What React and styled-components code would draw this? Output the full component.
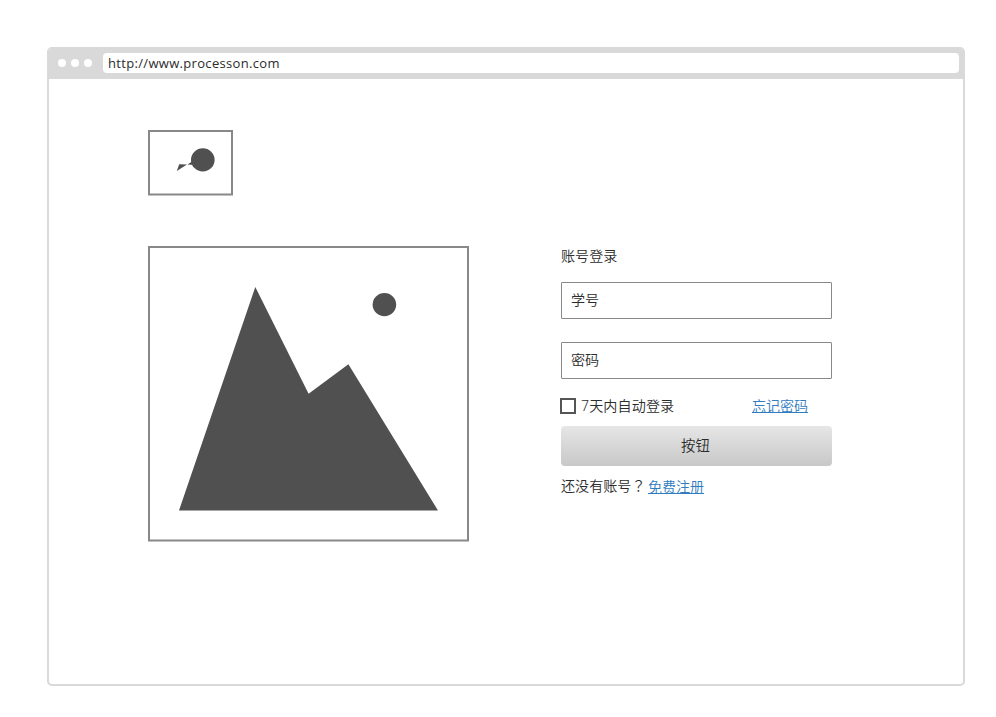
import React from "react";
import styled, { createGlobalStyle } from "styled-components";

const GlobalStyle = createGlobalStyle`
  * { box-sizing: border-box; }
  body { margin: 0; background: #fff; }
`;

const Page = styled.div`
  width: 996px;
  height: 717px;
  padding: 47px 31px 31px 47px;
  background: #fff;
  color: #2c2c2c;
  font: 350 14.1px/20px "Noto Sans", "Noto Sans CJK SC", sans-serif;
`;

const BrowserWindow = styled.div`
  width: 918px;
  height: 639px;
  border: 2px solid #d9d9d9;
  border-radius: 5px;
  overflow: hidden;
`;

const TitleBar = styled.header`
  display: flex;
  align-items: center;
  height: 30px;
  padding: 0 4px 2px 9px;
  background: #d9d9d9;
`;

const Dots = styled.div`
  display: flex;
  gap: 5px;
  margin-right: 11px;
`;

const Dot = styled.i`
  width: 8px;
  height: 8px;
  border-radius: 50%;
  background: #fff;
`;

const AddressBar = styled.div`
  flex: 1;
  height: 20px;
  padding-left: 5px;
  border-radius: 4px;
  background: #fff;
  font-family: "Open Sans", sans-serif;
  font-size: 13px;
  font-weight: 400;
  letter-spacing: 0.32px;
  line-height: 20px;
`;

const Content = styled.main`
  padding: 51px 0 0 99px;
`;

const Picture = styled.svg`
  display: block;
  fill: #505050;
`;

const Outline = styled.rect`
  fill: #fff;
  stroke: #888;
  stroke-width: 2;
`;

const Columns = styled.section`
  display: flex;
  gap: 92px;
  margin-top: 50px;
`;

const LoginForm = styled.form`
  display: flex;
  flex-direction: column;
  width: 271px;
`;

const Heading = styled.h1`
  margin: 0 0 16px;
  font: inherit;
`;

const Field = styled.input`
  width: 271px;
  height: 37px;
  margin: 0 0 23px;
  padding: 0 9px 2px;
  border: 1px solid #888;
  border-radius: 1px;
  background: #fff;
  font: inherit;
  outline: none;
  &::placeholder { color: #2c2c2c; opacity: 1; }
`;

const Options = styled.div`
  display: flex;
  align-items: center;
  height: 20px;
  margin: -6px 0 10px -1px;
`;

const Checkbox = styled.input`
  appearance: none;
  width: 16px;
  height: 16px;
  margin: 0 5px 0 0;
  border: 2px solid #555;
  background: #fff;
`;

const Remember = styled.label`
  display: flex;
  align-items: center;
  letter-spacing: 0.1px;
`;

const Link = styled.a`
  color: #307cc0;
  font-size: 14px;
  text-decoration: underline;
  text-decoration-thickness: 1px;
  text-underline-offset: 1px;
`;

const ForgotLink = styled(Link)`
  margin-left: auto;
  margin-right: 24px;
`;

const SubmitButton = styled.button`
  height: 39.5px;
  padding: 0 2px 0 0;
  border: 0;
  border-radius: 4px;
  background: linear-gradient(#e6e6e6, #c8c8c8);
  color: #2c2c2c;
  font: inherit;
  font-size: 14.4px;
`;

const SignUp = styled.p`
  display: flex;
  gap: 2.4px;
  margin: 9.5px 0 0;
  font-family: "Noto Sans CJK TC", sans-serif;
`;

const Simplified = styled.span`
  font-family: "Noto Sans CJK SC", sans-serif;
`;

const RegisterLink = styled(Link)`
  margin-top: 1px;
  font-family: "Noto Sans CJK SC", sans-serif;
`;

export default function App() {
  return (
    <>
      <GlobalStyle />
      <Page lang="zh-CN">
        <BrowserWindow>
          <TitleBar>
            <Dots><Dot /><Dot /><Dot /></Dots>
            <AddressBar>http://www.processon.com</AddressBar>
          </TitleBar>
          <Content>
            <Picture width="85" height="66" viewBox="0 0 85 66">
              <Outline x="1" y="1" width="83" height="63.5" />
              <path d="M28.8 41 L31.2 34.3 L39 34.6 Z" />
              <path d="M39.5 34.4 L44 31.5 L46 35 Z" />
              <ellipse cx="54.8" cy="29.9" rx="11.8" ry="11.6" />
            </Picture>
            <Columns>
              <Picture width="321" height="296" viewBox="0 0 321 296">
                <Outline x="1" y="1" width="319" height="293.5" />
                <path d="M31 264.5 L107.3 41 L160.6 147.8 L200.4 118.3 L290 264.5 Z" />
                <ellipse cx="236.4" cy="58.6" rx="11.8" ry="11.6" />
              </Picture>
              <LoginForm onSubmit={(e) => e.preventDefault()}>
                <Heading>账号登录</Heading>
                <Field placeholder="学号" />
                <Field placeholder="密码" />
                <Options>
                  <Remember><Checkbox type="checkbox" />7天内自动登录</Remember>
                  <ForgotLink href="#">忘记密码</ForgotLink>
                </Options>
                <SubmitButton>按钮</SubmitButton>
                <SignUp>
                  <span lang="zh-TW"><Simplified lang="zh-CN">还没有账号</Simplified>？</span>
                  <RegisterLink href="#">免费注册</RegisterLink>
                </SignUp>
              </LoginForm>
            </Columns>
          </Content>
        </BrowserWindow>
      </Page>
    </>
  );
}
